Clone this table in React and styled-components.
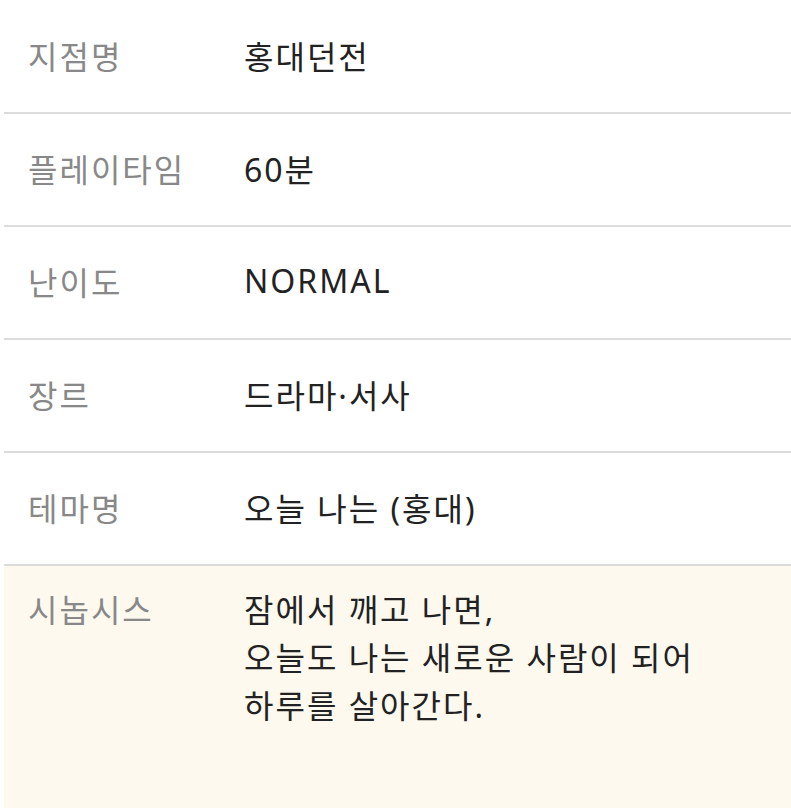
import React from "react";
import styled, { createGlobalStyle } from "styled-components";

const GlobalStyle = createGlobalStyle`
  html, body {
    margin: 0;
    padding: 0;
    background: #ffffff;
  }
  body {
    font-family: "Noto Sans", "Noto Sans CJK KR", sans-serif;
  }
`;

const rows = [
  { label: "지점명", value: "홍대던전" },
  { label: "플레이타임", value: "60분" },
  { label: "난이도", value: "NORMAL" },
  { label: "장르", value: "드라마·서사" },
  { label: "테마명", value: "오늘 나는 (홍대)" },
];

const synopsis = [
  "잠에서 깨고 나면,",
  "오늘도 나는 새로운 사람이 되어",
  "하루를 살아간다.",
];

function App() {
  return (
    <>
      <GlobalStyle />
      <InfoTable>
        {rows.map((row) => (
          <Row key={row.label}>
            <Label>{row.label}</Label>
            <Value>{row.value}</Value>
          </Row>
        ))}
        <SynopsisRow>
          <Label>시놉시스</Label>
          <SynopsisText>
            {synopsis.map((line) => (
              <div key={line}>{line}</div>
            ))}
          </SynopsisText>
        </SynopsisRow>
      </InfoTable>
    </>
  );
}

const InfoTable = styled.div`
  margin-left: 4px;
  padding-top: 1px;
  display: flex;
  flex-direction: column;
  min-height: 807px;
  font-size: 32px;
  letter-spacing: 2px;
`;

const Row = styled.div`
  display: grid;
  grid-template-columns: 240px 1fr;
  align-items: center;
  box-sizing: border-box;
  height: 113px;
  padding-bottom: 4px;
  border-bottom: 2px solid #dcdcdc;
`;

const Label = styled.div`
  padding-left: 24px;
  color: #888888;
`;

const Value = styled.div`
  color: #222222;
`;

const SynopsisRow = styled.div`
  flex: 1;
  display: grid;
  grid-template-columns: 240px 1fr;
  align-items: start;
  padding-top: 20px;
  background: #fdf9ef;
  line-height: 48px;
`;

const SynopsisText = styled.div`
  color: #222222;
`;

export default App;
